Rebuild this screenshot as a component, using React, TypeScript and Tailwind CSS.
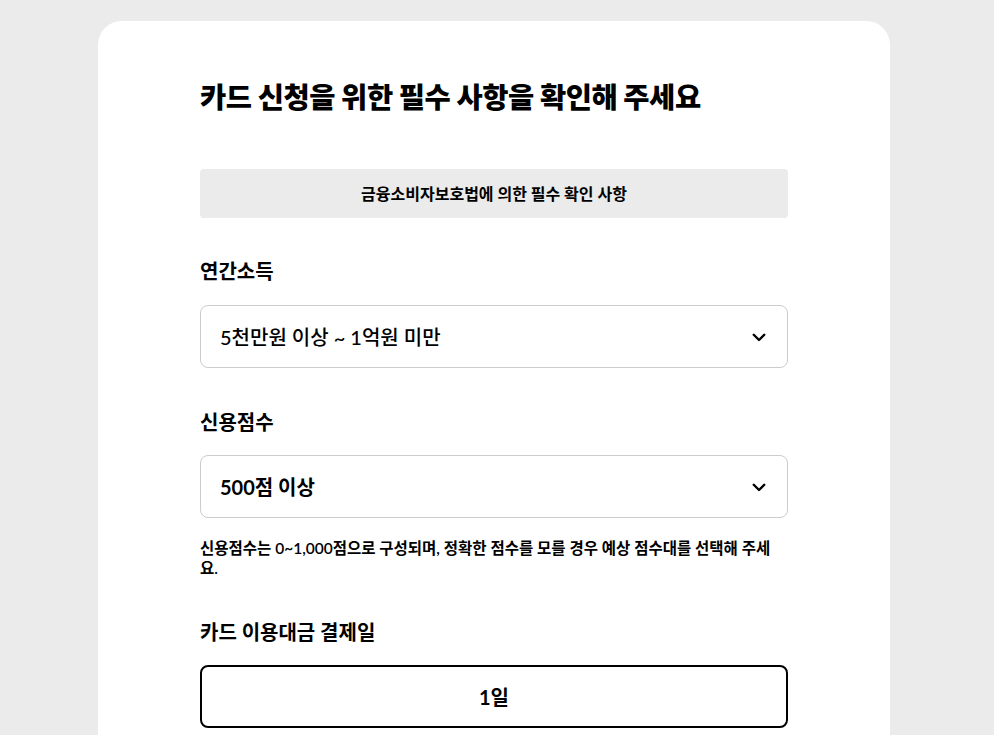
import React from "react";

function Chevron() {
  return (
    <svg width="18" height="18" viewBox="0 0 24 24" fill="none" stroke="#000" strokeWidth="3.2" strokeLinecap="round" strokeLinejoin="round">
      <path d="M5 9l7 7 7-7" />
    </svg>
  );
}

export default function App() {
  return (
    <div className="min-h-[735px] bg-[#ebebeb] pt-[21px] text-black" style={{ fontFamily: 'Lato, "Noto Sans CJK KR", sans-serif' }}>
      <div className="ml-[98px] w-[792px] min-h-[714px] rounded-t-[24px] bg-white px-[102px] pt-[57px]">
        <h1 className="text-[28.5px] font-extrabold leading-[38px] tracking-[-0.45px]">카드 신청을 위한 필수 사항을 확인해 주세요</h1>
        <div className="mt-[53px] flex h-[49px] items-center justify-center rounded-[4px] bg-[#ebebeb] text-[16px] font-bold">
          금융소비자보호법에 의한 필수 확인 사항
        </div>
        <div className="mt-[40px] text-[20px] font-bold leading-[26px]">연간소득</div>
        <div className="mt-[21px] flex h-[63px] items-center justify-between rounded-[8px] border border-[#cccccc] pl-[19px] pr-[19px]">
          <span className="text-[20px] font-medium">5천만원 이상 ~ 1억원 미만</span>
          <Chevron />
        </div>
        <div className="mt-[41px] text-[20px] font-bold leading-[26px]">신용점수</div>
        <div className="mt-[20px] flex h-[63px] items-center justify-between rounded-[8px] border border-[#cccccc] pl-[19px] pr-[19px]">
          <span className="text-[20px] font-bold">500점 이상</span>
          <Chevron />
        </div>
        <p className="mt-[20px] text-[15.5px] font-semibold leading-[20px]">
          신용점수는 0~1,000점으로 구성되며, 정확한 점수를 모를 경우 예상 점수대를 선택해 주세요.
        </p>
        <div className="mt-[41px] text-[20px] font-bold leading-[26px]">카드 이용대금 결제일</div>
        <div className="mt-[20px] flex h-[63px] items-center justify-center rounded-[8px] border-2 border-black text-[20px] font-bold">
          1일
        </div>
      </div>
    </div>
  );
}
